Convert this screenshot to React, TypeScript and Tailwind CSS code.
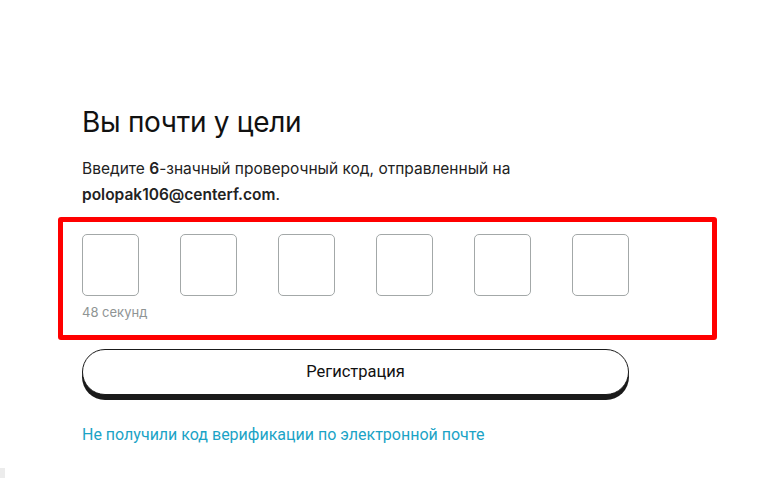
import React from 'react';

export default function App() {
  const cells = [0, 1, 2, 3, 4, 5];

  return (
    <div className="relative min-h-[478px] w-full bg-white font-['Inter',sans-serif] text-[#111]">
      <div className="pl-[82px] pt-[105px]">
        <h1 className="text-[28px] leading-[34px] font-normal tracking-[-0.3px]">Вы почти у цели</h1>

        <p className="mt-[17px] text-[15.5px] leading-[26px] text-[#222]">
          Введите <span className="font-semibold">6</span>-значный проверочный код, отправленный на
          <br />
          <span className="font-semibold">polopak106@centerf.com</span>.
        </p>

        {/* code inputs, highlighted */}
        <div className="mt-[9px] ml-[-24px] w-[659px] rounded-[3px] border-[5px] border-[#ff0000] pl-[19px] pt-[12px] pb-[14px]">
          <div className="flex gap-[41px]">
            {cells.map((i) => (
              <input
                key={i}
                maxLength={1}
                className="h-[62px] w-[57px] rounded-[5px] border border-[#a3a8a8] bg-white text-center text-xl outline-none"
              />
            ))}
          </div>
          <div className="mt-[7px] text-[13px] leading-[18px] text-[#8f9494]">48 секунд</div>
        </div>

        <button className="mt-[9px] flex h-[46px] w-[547px] items-center justify-center rounded-full border border-[#1a1a1a] bg-white font-['Roboto',sans-serif] text-[16.5px] text-[#111] shadow-[0_5px_0_#1a1a1a]">
          Регистрация
        </button>

        <a className="mt-[29px] block font-['Roboto',sans-serif] text-[16px] leading-[22px] text-[#1ba3c6]">
          Не получили код верификации по электронной почте
        </a>
      </div>

      <div className="absolute bottom-0 left-0 h-[10px] w-[5px] bg-[#ececec]" />
    </div>
  );
}
